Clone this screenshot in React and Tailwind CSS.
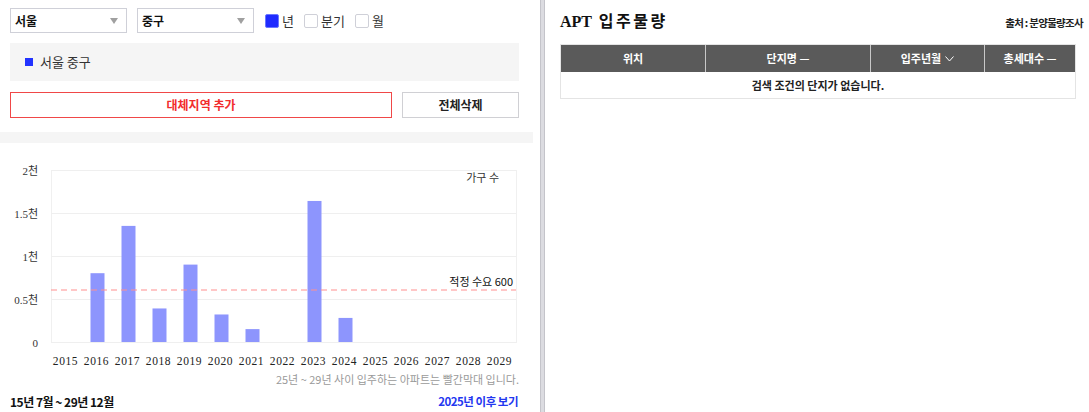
import React from 'react';

const years = [2015, 2016, 2017, 2018, 2019, 2020, 2021, 2022, 2023, 2024, 2025, 2026, 2027, 2028, 2029];
const supply = { 2016: 800, 2017: 1350, 2018: 390, 2019: 900, 2020: 320, 2021: 150, 2023: 1640, 2024: 280 };

function Select({ label }) {
  return (
    <div className="flex items-center justify-between w-[117px] h-[25px] border border-[#cfd0d8] bg-white pl-[4px] pr-[8px]">
      <span className="text-[12px] font-bold text-[#111]">{label}</span>
      <svg width="8" height="6" viewBox="0 0 8 6">
        <path d="M0 0h8L4 6z" fill="#a0a0a0" />
      </svg>
    </div>
  );
}

function Check({ checked, label }) {
  return (
    <label className="flex items-center gap-[3px] mr-[10px]">
      <span
        className={`w-[14px] h-[14px] rounded-[2px] border ${checked ? 'bg-[#1f2bff] border-[#6a78ff]' : 'bg-white border-[#cfd0d8]'}`}
      />
      <span className="text-[13px] text-[#333]">{label}</span>
    </label>
  );
}

function Chart() {
  // plot box: x 51..516, y 27..199 (0 at 199, 2000 at 27)
  const x0 = 51;
  const step = 31;
  const base = 199;
  const pxPerUnit = 172 / 2000;
  const grid = [
    { v: 2000, l: '2천' },
    { v: 1500, l: '1.5천' },
    { v: 1000, l: '1천' },
    { v: 500, l: '0.5천' },
    { v: 0, l: '0' },
  ];
  return (
    <svg width="533" height="229" className="block">
      <rect x={x0 + 0.5} y="27.5" width="465" height="172" fill="none" stroke="#f0f0f0" />
      {grid.map(g => {
        const y = base - g.v * pxPerUnit + 0.5;
        return (
          <g key={g.l}>
            <line x1={x0} x2="516" y1={y} y2={y} stroke="#efefef" />
            <text
              x="38"
              y={y + 4}
              textAnchor="end"
              fontSize="11"
              fill="#333"
              fontFamily="'Liberation Serif','Noto Sans CJK KR',serif"
            >
              {g.l}
            </text>
          </g>
        );
      })}
      {years.map((yr, i) => {
        const cx = x0 + step * i + step / 2;
        const v = supply[yr];
        return (
          <g key={yr}>
            {v && (
              <rect x={cx - 7} y={base - v * pxPerUnit} width="14" height={v * pxPerUnit} fill="#8d95fd" />
            )}
            <text
              x={cx - 1}
              y="222"
              textAnchor="middle"
              fontSize="11.5"
              fill="#222"
              letterSpacing="0.6"
              fontFamily="'Liberation Serif',serif"
            >
              {yr}
            </text>
          </g>
        );
      })}
      <line x1={x0} x2="516" y1="147" y2="147" stroke="#ff8f8f" strokeWidth="1.2" strokeDasharray="6 4" />
      <text x="513" y="143" textAnchor="end" fontSize="11" fill="#111" fontFamily="'Noto Sans CJK KR',sans-serif">
        적정 수요 600
      </text>
      <text x="499" y="39" textAnchor="end" fontSize="11" fill="#333" fontFamily="'Noto Sans CJK KR',sans-serif">
        가구 수
      </text>
    </svg>
  );
}

export default function App() {
  return (
    <div className="flex w-[1089px] h-[412px] overflow-hidden bg-white font-['Noto_Sans_CJK_KR','Noto_Sans',sans-serif]">
      {/* Left panel */}
      <div className="w-[533px] flex-shrink-0 flex flex-col">
        <div className="pl-[10px] pr-[14px]">
          <div className="flex items-center h-[25px] mt-[8px]">
            <Select label="서울" />
            <div className="w-[10px]" />
            <Select label="중구" />
            <div className="w-[11px]" />
            <Check checked label="년" />
            <Check label="분기" />
            <Check label="월" />
          </div>

          <div className="mt-[10px] h-[38px] bg-[#f5f5f5] flex items-center pl-[15px] gap-[7px]">
            <span className="w-[8px] h-[8px] bg-[#2233ff]" />
            <span className="text-[13px] text-[#333]">서울 중구</span>
          </div>

          <div className="mt-[11px] flex gap-[10px]">
            <button className="w-[382px] h-[26px] border border-[#f04848] text-[12px] font-bold text-[#f22c2c]">
              대체지역 추가
            </button>
            <button className="flex-1 h-[26px] border border-[#d0d0d4] text-[12px] font-bold text-[#222]">
              전체삭제
            </button>
          </div>
        </div>

        <div className="mt-[14px] h-[11px] bg-[#f5f5f5]" />

        <Chart />

        <div className="pr-[14px] text-right text-[11px] leading-[14px] text-[#9a9a9a]">
          25년 ~ 29년 사이 입주하는 아파트는 빨간막대 입니다.
        </div>

        <div className="mt-[7px] pl-[10px] pr-[15px] flex items-center justify-between h-[18px]">
          <span className="text-[12px] font-bold text-[#111] tracking-[-0.5px]">15년 7월 ~ 29년 12월</span>
          <span className="text-[11.5px] font-bold text-[#2337f0] tracking-[-0.5px]">2025년 이후 보기</span>
        </div>
      </div>

      <div className="w-[7px] flex-shrink-0" />
      {/* Divider */}
      <div className="w-[5px] flex-shrink-0 bg-[#dcdce1] border-x border-[#c4c4ca]" />

      {/* Right panel */}
      <div className="flex-1 pl-[15px] pr-[6px]">
        <div className="flex items-end justify-between h-[31px]">
          <h2 className="text-[16px] font-bold text-[#111] leading-none mb-[1px] font-['Liberation_Serif','Noto_Sans_CJK_KR',serif]">
            APT <span className="ml-[3px] tracking-[2.5px]">입주물량</span>
          </h2>
          <span className="text-[10.5px] font-bold text-[#222] tracking-[-0.7px]">출처 : 분양물량조사</span>
        </div>

        <div className="mt-[13px] w-[516px] border border-[#e4e4e4]">
          <div className="grid grid-cols-[145px_165px_114px_90px] h-[27px] bg-[#5a5a5a] text-white text-[11px] font-bold">
            <div className="flex items-center justify-center border-r border-[#c8c8c8]">위치</div>
            <div className="flex items-center justify-center border-r border-[#c8c8c8]">단지명 —</div>
            <div className="flex items-center justify-center border-r border-[#c8c8c8] gap-[4px]">
              입주년월
              <svg width="9" height="6" viewBox="0 0 9 6">
                <path d="M0.5 0.5L4.5 5L8.5 0.5" fill="none" stroke="#fff" strokeWidth="1" />
              </svg>
            </div>
            <div className="flex items-center justify-center">총세대수 —</div>
          </div>
          <div className="h-[26px] flex items-center justify-center text-[11px] font-bold text-[#222]">
            검색 조건의 단지가 없습니다.
          </div>
        </div>
      </div>
    </div>
  );
}
